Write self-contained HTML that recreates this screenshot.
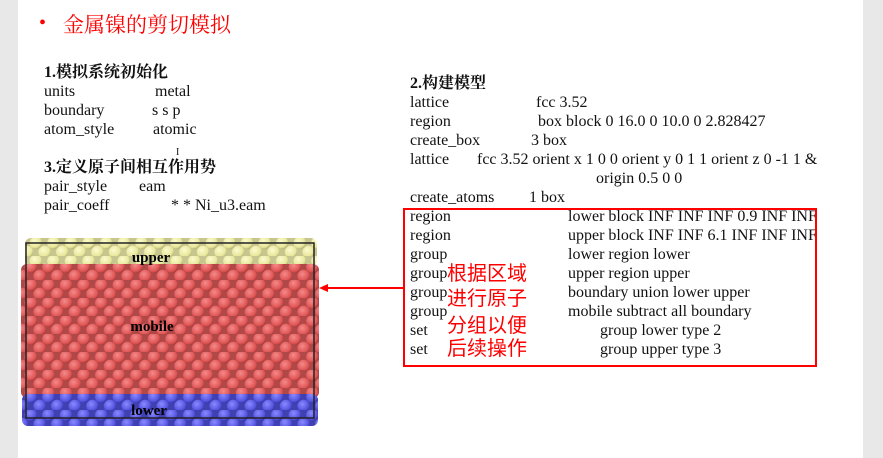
<!DOCTYPE html>
<html><head><meta charset="utf-8"><style>
html,body{margin:0;padding:0}
body{width:883px;height:458px;position:relative;background:#fff;overflow:hidden;font-family:"Liberation Serif","Noto Serif CJK SC",serif;font-size:16px;color:#111}
.l{position:absolute;white-space:pre;line-height:18px}
.b{font-weight:bold}
.r{color:#f00;font-family:"Liberation Sans","Noto Sans CJK SC",sans-serif;font-size:20px;line-height:20px}
</style></head><body>
<div style="position:absolute;left:0;top:0;width:18px;height:458px;background:#e8e8e8"></div>
<div style="position:absolute;left:863px;top:0;width:20px;height:458px;background:#e8e8e8"></div>
<div class="l" style="left:39px;top:14px;color:#f00;font-size:20px">•</div>
<div class="l" style="left:63px;top:12px;color:#f00;font-size:21px;line-height:26px">金属镍的剪切模拟</div>

<div class="l b" style="left:44px;top:64px">1.模拟系统初始化</div>
<div class="l" style="left:44px;top:83px">units</div><div class="l" style="left:155px;top:83px">metal</div>
<div class="l" style="left:44px;top:102px">boundary</div><div class="l" style="left:152px;top:102px">s s p</div>
<div class="l" style="left:44px;top:121px">atom_style</div><div class="l" style="left:153px;top:121px">atomic</div>
<div class="l" style="left:176px;top:144px;font-size:10px">I</div>
<div class="l b" style="left:44px;top:159px">3.定义原子间相互作用势</div>
<div class="l" style="left:44px;top:178px">pair_style</div><div class="l" style="left:139px;top:178px">eam</div>
<div class="l" style="left:44px;top:197px">pair_coeff</div><div class="l" style="left:171px;top:197px">* * Ni_u3.eam</div>

<div class="l b" style="left:410px;top:75px">2.构建模型</div>
<div class="l" style="left:410px;top:94px">lattice</div><div class="l" style="left:536px;top:94px">fcc 3.52</div>
<div class="l" style="left:410px;top:113px">region</div><div class="l" style="left:538px;top:113px">box block 0 16.0 0 10.0 0 2.828427</div>
<div class="l" style="left:410px;top:132px">create_box</div><div class="l" style="left:531px;top:132px">3 box</div>
<div class="l" style="left:410px;top:151px">lattice</div><div class="l" style="left:477px;top:151px">fcc 3.52 orient x 1 0 0 orient y 0 1 1 orient z 0 -1 1 &amp;</div>
<div class="l" style="left:596px;top:170px">origin 0.5 0 0</div>
<div class="l" style="left:410px;top:189px">create_atoms</div><div class="l" style="left:529px;top:189px">1 box</div>

<div style="position:absolute;left:403px;top:208px;width:410px;height:155px;border:2px solid #f00"></div>
<div style="position:absolute;left:405px;top:210px;width:410px;height:150px;overflow:hidden">
<div class="l" style="left:5px;top:-2px">region</div><div class="l" style="left:163px;top:-2px">lower block INF INF INF 0.9 INF INF</div>
<div class="l" style="left:5px;top:17px">region</div><div class="l" style="left:163px;top:17px">upper block INF INF 6.1 INF INF INF</div>
<div class="l" style="left:5px;top:36px">group</div><div class="l" style="left:163px;top:36px">lower region lower</div>
<div class="l" style="left:5px;top:55px">group</div><div class="l" style="left:163px;top:55px">upper region upper</div>
<div class="l" style="left:5px;top:74px">group</div><div class="l" style="left:163px;top:74px">boundary union lower upper</div>
<div class="l" style="left:5px;top:93px">group</div><div class="l" style="left:163px;top:93px">mobile subtract all boundary</div>
<div class="l" style="left:5px;top:112px">set</div><div class="l" style="left:195px;top:112px">group lower type 2</div>
<div class="l" style="left:5px;top:131px">set</div><div class="l" style="left:195px;top:131px">group upper type 3</div>
</div>
<div class="l r" style="left:447px;top:264px">根据区域</div>
<div class="l r" style="left:447px;top:289px">进行原子</div>
<div class="l r" style="left:447px;top:316px">分组以便</div>
<div class="l r" style="left:447px;top:339px">后续操作</div>

<svg style="position:absolute;left:0;top:0" width="883" height="458">
<defs>
<radialGradient id="gy" cx="0.4" cy="0.35" r="0.7"><stop offset="0" stop-color="#fbfbd0"/><stop offset="0.7" stop-color="#e9e79a"/><stop offset="1" stop-color="#a8a66a"/></radialGradient>
<radialGradient id="gr" cx="0.4" cy="0.35" r="0.7"><stop offset="0" stop-color="#f58a8a"/><stop offset="0.7" stop-color="#e05555"/><stop offset="1" stop-color="#9a3535"/></radialGradient>
<radialGradient id="gb" cx="0.4" cy="0.35" r="0.7"><stop offset="0" stop-color="#8a8aff"/><stop offset="0.7" stop-color="#5555e0"/><stop offset="1" stop-color="#30309a"/></radialGradient>
<pattern id="py" x="27" y="238" width="17.6" height="18" patternUnits="userSpaceOnUse"><rect width="17.6" height="18" fill="#c8c690"/><circle cx="8.8" cy="5" r="6.2" fill="url(#gy)"/><circle cx="0" cy="14" r="6.2" fill="url(#gy)"/><circle cx="17.6" cy="14" r="6.2" fill="url(#gy)"/></pattern>
<pattern id="pr" x="22" y="262" width="17.6" height="18" patternUnits="userSpaceOnUse"><rect width="17.6" height="18" fill="#b04848"/><circle cx="8.8" cy="5" r="6.2" fill="url(#gr)"/><circle cx="0" cy="14" r="6.2" fill="url(#gr)"/><circle cx="17.6" cy="14" r="6.2" fill="url(#gr)"/></pattern>
<pattern id="pb" x="22" y="392" width="17.6" height="18" patternUnits="userSpaceOnUse"><rect width="17.6" height="18" fill="#4040b0"/><circle cx="8.8" cy="5" r="6.2" fill="url(#gb)"/><circle cx="0" cy="14" r="6.2" fill="url(#gb)"/><circle cx="17.6" cy="14" r="6.2" fill="url(#gb)"/></pattern>
</defs>
<rect x="25" y="238" width="292" height="28" rx="6" fill="url(#py)"/>
<rect x="21" y="264" width="298" height="134" rx="6" fill="url(#pr)"/>
<rect x="22" y="394" width="296" height="32" rx="6" fill="url(#pb)"/>
<rect x="26" y="243" width="288" height="175" fill="none" stroke="#222" stroke-width="1.5"/>
<text x="151" y="262" font-family="Liberation Serif" font-weight="bold" font-size="15" text-anchor="middle" fill="#000">upper</text>
<text x="152" y="331" font-family="Liberation Serif" font-weight="bold" font-size="15" text-anchor="middle" fill="#000">mobile</text>
<text x="149" y="415" font-family="Liberation Serif" font-weight="bold" font-size="15" text-anchor="middle" fill="#000">lower</text>
<line x1="404" y1="288" x2="326" y2="288" stroke="#f00" stroke-width="2"/>
<polygon points="319,288 328,284 328,292" fill="#f00"/>
</svg>
</body></html>
